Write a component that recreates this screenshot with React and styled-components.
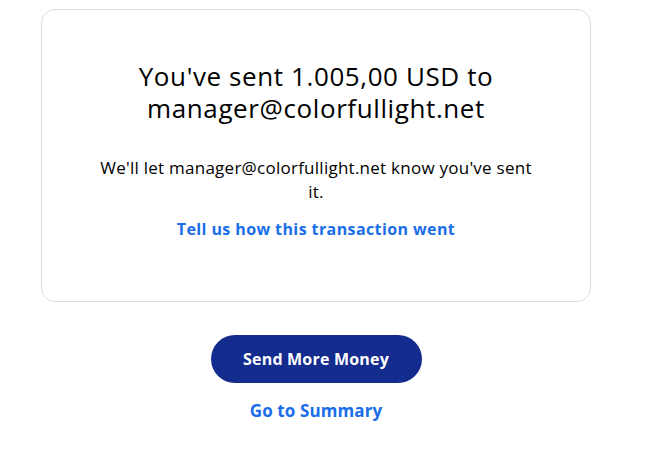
import styled, { createGlobalStyle } from 'styled-components'

const GlobalStyle = createGlobalStyle`
  * {
    box-sizing: border-box;
  }
  body {
    margin: 0;
    background: #ffffff;
    font-family: 'Open Sans', 'Noto Sans', sans-serif;
    color: #000000;
  }
`

const App = () => {
  return (
    <>
      <GlobalStyle />
      <Page>
        <Column>
          <Card>
            <Title>You've sent 1.005,00 USD to manager@colorfullight.net</Title>
            <Message>We'll let manager@colorfullight.net know you've sent it.</Message>
            <Link href='#' $top='13px'>
              Tell us how this transaction went
            </Link>
          </Card>
          <Actions>
            <PrimaryButton type='button'>Send More Money</PrimaryButton>
            <Link href='#' $top='16px' $size='17px' $spacing='0.1px'>
              Go to Summary
            </Link>
          </Actions>
        </Column>
      </Page>
    </>
  )
}

export default App

const Page = styled.div`
  display: flex;
  padding: 9px 0 0 41px;
  min-height: 472px;
`

const Column = styled.div`
  width: 550px;
  display: flex;
  flex-direction: column;
  align-items: center;
`

const Card = styled.div`
  width: 100%;
  border: 1px solid #dcdad3;
  border-radius: 14px;
  padding: 50px 40px 60px;
  display: flex;
  flex-direction: column;
  align-items: center;
  text-align: center;
`

const Title = styled.h1`
  margin: 0 30px;
  font-size: 26px;
  line-height: 32px;
  font-weight: 400;
  letter-spacing: 0.6px;
`

const Message = styled.p`
  max-width: 442px;
  margin: 32px 0 0;
  font-size: 17px;
  line-height: 24px;
  letter-spacing: 0.25px;
`

const Link = styled.a`
  margin-top: ${({ $top }) => $top};
  font-size: ${({ $size }) => $size || '16px'};
  line-height: 24px;
  font-weight: 700;
  letter-spacing: ${({ $spacing }) => $spacing || '0.4px'};
  color: #1a6ee9;
  text-decoration: none;
`

const Actions = styled.div`
  display: flex;
  flex-direction: column;
  align-items: center;
  margin-top: 33px;
`

const PrimaryButton = styled.button`
  width: 211px;
  height: 48px;
  border: none;
  border-radius: 24px;
  background: #142c8e;
  color: #ffffff;
  font-family: inherit;
  font-size: 16px;
  font-weight: 700;
  letter-spacing: 0.2px;
  cursor: pointer;
`
